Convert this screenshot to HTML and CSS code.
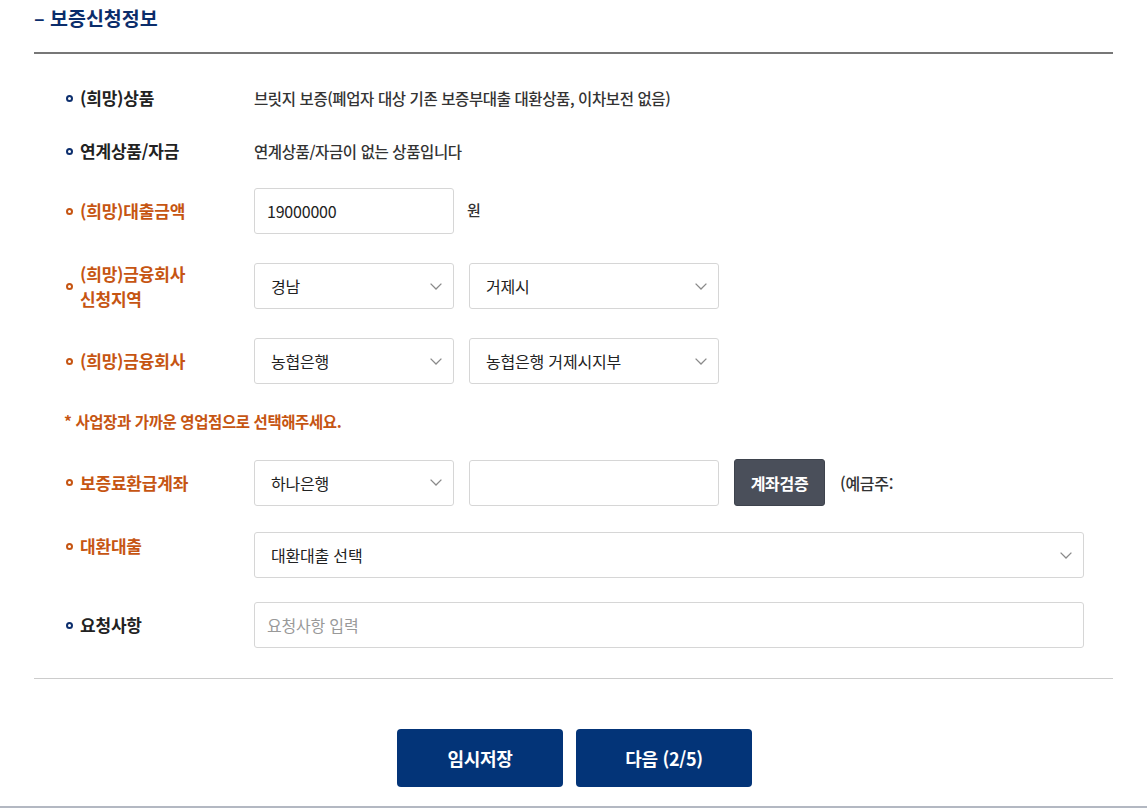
FILE: index.html
```html
<!DOCTYPE html>
<html lang="ko">
<head>
<meta charset="utf-8">
<title>보증신청정보</title>
<link rel="stylesheet" href="styles.css">
</head>
<body>
<section class="section">
  <h2 class="title"><span class="dash">–</span>보증신청정보</h2>

  <div class="group group-a">
    <div class="row row-text">
      <div class="label"><i class="dot"></i><span>(희망)상품</span></div>
      <div class="value">브릿지 보증(폐업자 대상 기존 보증부대출 대환상품, 이차보전 없음)</div>
    </div>
    <div class="row row-text row-tight">
      <div class="label"><i class="dot"></i><span>연계상품/자금</span></div>
      <div class="value">연계상품/자금이 없는 상품입니다</div>
    </div>
    <div class="row">
      <div class="label req"><i class="dot"></i><span>(희망)대출금액</span></div>
      <div class="fields">
        <div class="box w200 input">19000000</div>
        <span class="unit">원</span>
      </div>
    </div>
    <div class="row">
      <div class="label req label-2line"><i class="dot"></i><span>(희망)금융회사<br>신청지역</span></div>
      <div class="fields">
        <div class="box w200 select"><span>경남</span><svg class="chev" viewBox="0 0 12 7"><polyline points="0.6,0.6 6,6 11.4,0.6"/></svg></div>
        <div class="box w250 select"><span>거제시</span><svg class="chev" viewBox="0 0 12 7"><polyline points="0.6,0.6 6,6 11.4,0.6"/></svg></div>
      </div>
    </div>
    <div class="row">
      <div class="label req"><i class="dot"></i><span>(희망)금융회사</span></div>
      <div class="fields">
        <div class="box w200 select"><span>농협은행</span><svg class="chev" viewBox="0 0 12 7"><polyline points="0.6,0.6 6,6 11.4,0.6"/></svg></div>
        <div class="box w250 select"><span>농협은행 거제시지부</span><svg class="chev" viewBox="0 0 12 7"><polyline points="0.6,0.6 6,6 11.4,0.6"/></svg></div>
      </div>
    </div>
    <p class="note">* 사업장과 가까운 영업점으로 선택해주세요.</p>
  </div>

  <div class="group group-b">
    <div class="row">
      <div class="label req"><i class="dot"></i><span>보증료환급계좌</span></div>
      <div class="fields">
        <div class="box w200 select"><span>하나은행</span><svg class="chev" viewBox="0 0 12 7"><polyline points="0.6,0.6 6,6 11.4,0.6"/></svg></div>
        <div class="box w250 input"></div>
        <button class="btn-verify" type="button">계좌검증</button>
        <span class="holder">(예금주:</span>
      </div>
    </div>
    <div class="row row-top">
      <div class="label req"><i class="dot"></i><span>대환대출</span></div>
      <div class="fields">
        <div class="box wfull select"><span>대환대출 선택</span><svg class="chev" viewBox="0 0 12 7"><polyline points="0.6,0.6 6,6 11.4,0.6"/></svg></div>
      </div>
    </div>
    <div class="row row-last">
      <div class="label"><i class="dot"></i><span>요청사항</span></div>
      <div class="fields">
        <div class="box wfull input placeholder">요청사항 입력</div>
      </div>
    </div>
  </div>

  <hr class="divider">

  <div class="actions">
    <button class="btn-main btn-save" type="button">임시저장</button>
    <button class="btn-main btn-next" type="button">다음 (2/5)</button>
  </div>
</section>
<footer class="footer"></footer>
</body>
</html>
```

FILE: styles.css
```css
* { box-sizing: border-box; }

html, body {
  margin: 0;
  padding: 0;
  background: #fff;
}

body {
  font-family: "Noto Sans CJK KR", "Noto Sans", sans-serif;
  color: #333;
  width: 1147px;
  height: 808px;
  overflow: hidden;
}

.section {
  padding: 0 34px;
}

.title {
  margin: 0;
  height: 54px;
  padding-top: 2px;
  line-height: 32px;
  font-size: 19.5px;
  font-weight: 700;
  color: #0b2d6b;
  border-bottom: 2px solid #777;
}

.dash {
  display: inline-block;
  width: 16px;
}

.group {
  display: flex;
  flex-direction: column;
  padding: 0 29px 0 30px;
}

.group-a {
  padding-top: 32px;
  gap: 29px;
}

.group-b {
  margin-top: 28px;
  gap: 26px;
}

.row {
  display: flex;
  align-items: center;
  min-height: 46px;
}

.row-text {
  min-height: 24px;
  height: 24px;
}

.row-tight {
  margin-bottom: -4px;
}

.row-last {
  margin-top: -2px;
}

.row-top {
  align-items: flex-start;
}

.row-top .label {
  padding-top: 2px;
}

.label {
  width: 190px;
  flex: none;
  display: flex;
  align-items: center;
  font-size: 17px;
  font-weight: 700;
  line-height: 24px;
  color: #222;
  letter-spacing: -0.2px;
}

.label-2line {
  line-height: 25px;
  margin: -2px 0;
}

.label.req {
  color: #c65512;
}

.dot {
  flex: none;
  width: 7px;
  height: 7px;
  border: 2px solid #0d2f6e;
  border-radius: 50%;
  margin: 0 7px 0 2px;
}

.label.req .dot {
  border-color: #c65512;
}

.value {
  font-size: 15.5px;
  font-weight: 500;
  color: #333;
  line-height: 24px;
  letter-spacing: -0.4px;
}

.fields {
  flex: 1;
  display: flex;
  align-items: center;
  gap: 15px;
}

.box {
  height: 46px;
  border: 1px solid #d6d6d6;
  border-radius: 3px;
  background: #fff;
  display: flex;
  align-items: center;
  font-size: 16px;
  color: #222;
  flex: none;
  letter-spacing: -0.2px;
}

.w200 { width: 200px; }
.w250 { width: 250px; }
.wfull { flex: 1; width: auto; }

.input {
  padding-left: 12px;
}

.placeholder {
  color: #999;
}

.select {
  padding: 0 11px 0 16px;
  justify-content: space-between;
}

.chev {
  width: 12px;
  height: 7px;
  fill: none;
  stroke: #8a8a8a;
  stroke-width: 1.3;
}

.unit {
  font-size: 15px;
  font-weight: 500;
  color: #333;
  margin-left: -2px;
  margin-top: -4px;
}

.btn-verify {
  flex: none;
  width: 91px;
  height: 47px;
  border: 1px solid #3e434d;
  border-radius: 3px;
  background: #4a4f5a;
  color: #fff;
  font-family: inherit;
  font-size: 16px;
  font-weight: 700;
  letter-spacing: -0.3px;
  padding: 0;
}

.holder {
  display: inline-block;
  width: 57px;
  overflow: hidden;
  white-space: nowrap;
  font-size: 16px;
  font-weight: 500;
  letter-spacing: -0.3px;
  color: #333;
}

.note {
  margin: -2px 0 0 0;
  height: 20px;
  line-height: 20px;
  font-size: 15.5px;
  font-weight: 700;
  color: #c65512;
  letter-spacing: -0.4px;
}

.divider {
  margin: 30px 0 0;
  border: 0;
  border-top: 1px solid #ccc;
  height: 0;
}

.actions {
  margin-top: 50px;
  display: flex;
  justify-content: center;
  gap: 13px;
  padding-left: 2px;
}

.btn-main {
  height: 58px;
  border: 0;
  border-radius: 4px;
  background: #033478;
  color: #fff;
  font-family: inherit;
  font-size: 18px;
  font-weight: 700;
  letter-spacing: -0.3px;
  padding: 0;
}

.btn-save { width: 166px; }
.btn-next { width: 176px; }

.footer {
  margin-top: 19px;
  border-top: 2px solid #b3b8c2;
  height: 10px;
}
```
